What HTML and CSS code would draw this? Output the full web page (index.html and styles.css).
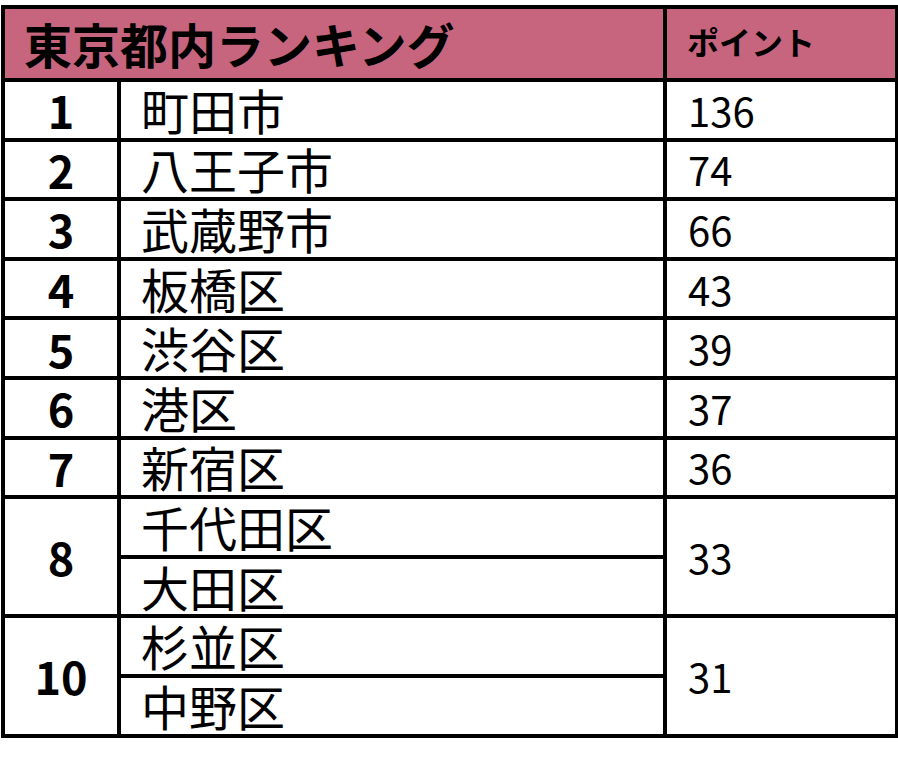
FILE: index.html
```html
<!DOCTYPE html>
<html lang="ja">
<head>
<meta charset="utf-8">
<link rel="stylesheet" href="styles.css">
</head>
<body>
<table class="rank">
  <colgroup>
    <col class="c-rank">
    <col class="c-name">
    <col class="c-pt">
  </colgroup>
  <thead>
    <tr class="head">
      <th colspan="2" class="title">東京都内ランキング</th>
      <th class="pt-head">ポイント</th>
    </tr>
  </thead>
  <tbody>
    <tr><td class="no">1</td><td class="name">町田市</td><td class="pt">136</td></tr>
    <tr><td class="no">2</td><td class="name">八王子市</td><td class="pt">74</td></tr>
    <tr><td class="no">3</td><td class="name">武蔵野市</td><td class="pt">66</td></tr>
    <tr><td class="no">4</td><td class="name">板橋区</td><td class="pt">43</td></tr>
    <tr><td class="no">5</td><td class="name">渋谷区</td><td class="pt">39</td></tr>
    <tr><td class="no">6</td><td class="name">港区</td><td class="pt">37</td></tr>
    <tr><td class="no">7</td><td class="name">新宿区</td><td class="pt">36</td></tr>
    <tr><td class="no" rowspan="2">8</td><td class="name">千代田区</td><td class="pt" rowspan="2">33</td></tr>
    <tr><td class="name">大田区</td></tr>
    <tr><td class="no" rowspan="2">10</td><td class="name">杉並区</td><td class="pt" rowspan="2">31</td></tr>
    <tr><td class="name">中野区</td></tr>
  </tbody>
</table>
</body>
</html>
```
FILE: styles.css
```css
html, body {
  margin: 0;
  padding: 0;
  background: #ffffff;
}
body {
  padding: 5px 0 0 1px;
  font-family: "Noto Sans CJK JP", "Noto Sans", sans-serif;
  color: #000;
}
.rank {
  border-collapse: collapse;
  width: 894px;
  table-layout: fixed;
  border: 4px solid #000;
}
.c-rank { width: 116px; }
.c-name { width: 546px; }
.c-pt { width: 232px; }
.rank th, .rank td {
  border: 4px solid #000;
  padding: 0;
  vertical-align: middle;
  line-height: 1;
  white-space: nowrap;
}
.head {
  height: 73px;
  background: #c8657e;
}
.rank .title {
  text-align: left;
  font-weight: 700;
  font-size: 48px;
  padding-left: 19px;
  padding-bottom: 2px;
}
.rank .pt-head {
  text-align: left;
  font-weight: 700;
  font-size: 32px;
  padding-left: 20px;
  padding-bottom: 6px;
}
.rank tbody tr {
  height: 59.6px;
}
.rank .no {
  text-align: center;
  font-weight: 700;
  font-size: 45px;
}
.rank .name {
  font-size: 48px;
  padding-left: 20px;
  padding-bottom: 2px;
}
.rank .pt {
  font-size: 40px;
  padding-left: 21px;
}
```
